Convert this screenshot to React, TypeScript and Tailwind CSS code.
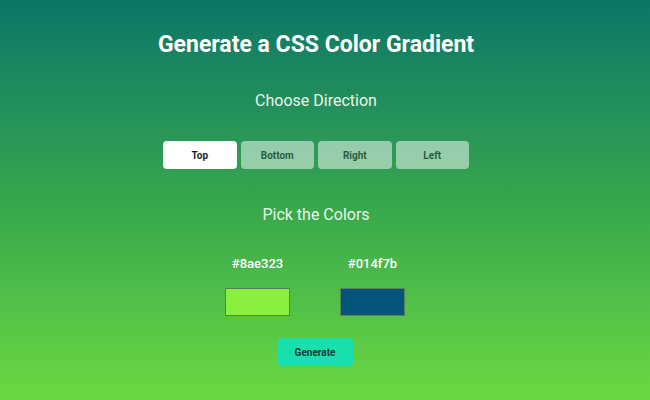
import React from "react";

export default function App() {
  const dirs = ["Top", "Bottom", "Right", "Left"];
  return (
    <div
      className="w-[650px] h-[400px] overflow-hidden bg-gradient-to-b from-[#0b7666] via-[#36a64c] to-[#6ad940]"
      style={{ fontFamily: "Roboto, 'Liberation Sans', sans-serif" }}
    >
      <div className="w-[632px] flex flex-col items-center pt-[31px]">
        <h1 className="text-[23px] leading-[28px] font-bold text-white">
          Generate a CSS Color Gradient
        </h1>
        <h2 className="mt-[32px] text-[16px] leading-[20px] text-[#e8f5ea]">
          Choose Direction
        </h2>
        <div className="mt-[30px] flex gap-[4px]">
          {dirs.map((d, i) => (
            <button
              key={d}
              className={
                "w-[73.5px] h-[28px] rounded-[4px] bg-white text-[10px] font-bold text-[#1e1e1e] " +
                (i === 0 ? "" : "opacity-50")
              }
            >
              {d}
            </button>
          ))}
        </div>
        <h2 className="mt-[36px] text-[16px] leading-[20px] text-[#e8f5ea]">
          Pick the Colors
        </h2>
        <div className="mt-[31px] flex gap-[50px] mr-[2px]">
          {[
            ["#8ae323", "bg-[#8af03f]"],
            ["#014f7b", "bg-[#03557a]"],
          ].map(([label, bg]) => (
            <div key={label} className="flex flex-col items-center w-[65px]">
              <span className="text-[13px] leading-[16px] font-medium text-white">
                {label}
              </span>
              <div
                className={
                  "mt-[16px] w-[65px] h-[28px] border border-[#5f7f5a] " + bg
                }
              />
            </div>
          ))}
        </div>
        <button className="mt-[22px] ml-[-2px] w-[75px] h-[28px] rounded-[4px] bg-[#17dfae] text-[10px] font-bold text-[#1b3a3a]">
          Generate
        </button>
      </div>
    </div>
  );
}
